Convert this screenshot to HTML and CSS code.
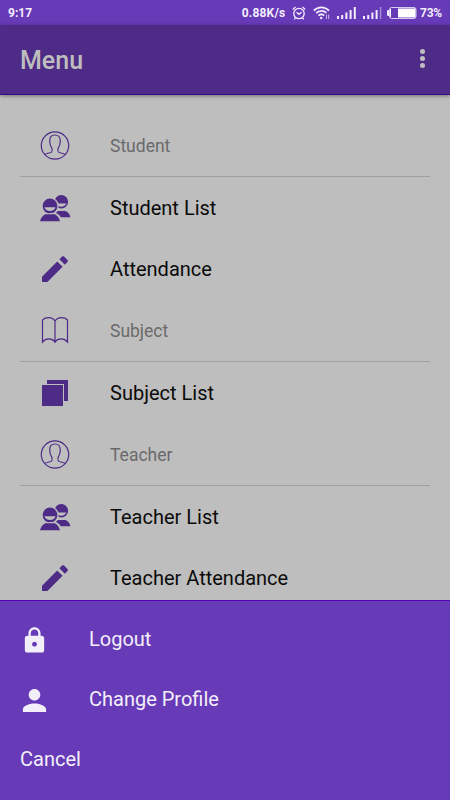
FILE: index.html
```html
<!DOCTYPE html>
<html lang="en">
<head>
<meta charset="utf-8">
<title>Menu</title>
<link rel="stylesheet" href="styles.css">
</head>
<body>
<svg class="defs" width="0" height="0" aria-hidden="true">
  <symbol id="contact" viewBox="0 0 30 30"><g fill="none" stroke="currentColor" stroke-width="1.200"><circle cx="15" cy="15.500" r="13.700"/><path d="M4.500 24.500c2-1.300 5.800-1.300 7.200-2.700.8-.9.500-2.400.1-3.600-1.300-1.800-2.100-4.200-2.100-7.200 0-4 1.700-6 5.300-6s5.300 2 5.300 6c0 3-.8 5.400-2.100 7.200-.4 1.200-.7 2.700.1 3.600 1.400 1.400 5.200 1.400 7.200 2.700"/></g></symbol>
  <symbol id="people" viewBox="-2 0 34 30"><g fill="currentColor"><circle cx="21.300" cy="8.700" r="6.800"/><path class="cut" d="M16 10.500h10.300c-.6 2-2.700 3.200-5 3.200S16.500 12.500 16 10.500z"/><path d="M16 24.300v-4.500l2-1.800h7c2.900.7 4.700 3 5.500 6.300z"/><circle class="cut" cx="10" cy="13" r="8.700"/><circle cx="10" cy="13" r="7.400"/><path class="cut" d="M4.400 14.300h11.200c-.7 2.400-2.900 3.800-5.600 3.800s-4.900-1.400-5.600-3.800z"/><path class="cut" d="M9 20h7c2.700 1 4.400 3 5.200 5.500V29H9z"/><path d="M0 28.200c.8-3.400 2.600-5.700 5.200-7h9.600c2.600 1.300 4.400 3.600 5.200 7z"/></g></symbol>
  <symbol id="pencil" viewBox="0 0 30 30"><path fill="currentColor" d="M2 22.700V28h5.400L22.600 12.800l-5.400-5.400zM27.500 8c.6-.6.6-1.400 0-2l-3.400-3.400c-.6-.6-1.400-.6-2 0l-2.700 2.700L24.800 10.700z"/></symbol>
  <symbol id="book" viewBox="0 0 30 30"><path fill="none" stroke="currentColor" stroke-width="1.200" d="M15 6c-1.500-2.200-3.600-3.300-6.300-3.300S4 3.500 2.500 5v22c3.400-4.100 9.400-4.100 12.500 0 3.100-4.100 9.100-4.100 12.500 0V5c-1.500-1.500-3.500-2.300-6.200-2.300S16.500 3.800 15 6zm0 0v22"/></symbol>
  <symbol id="copies" viewBox="0 0 30 30"><path fill="currentColor" d="M2 7h21v21H2zM7 2h21v21h-4V6H7z"/></symbol>
  <symbol id="lock" viewBox="0 0 24 24"><path fill="currentColor" d="M18 8h-1V6c0-2.760-2.240-5-5-5S7 3.240 7 6v2H6c-1.100 0-2 .9-2 2v10c0 1.100.9 2 2 2h12c1.100 0 2-.9 2-2V10c0-1.100-.9-2-2-2zm-6 9c-1.100 0-2-.9-2-2s.9-2 2-2 2 .9 2 2-.9 2-2 2zm3.100-9H8.900V6c0-1.710 1.390-3.100 3.100-3.100s3.100 1.390 3.100 3.100z"/></symbol>
  <symbol id="person" viewBox="2 2 20 20"><path fill="currentColor" d="M12 12c2.210 0 4-1.790 4-4s-1.790-4-4-4-4 1.790-4 4 1.790 4 4 4zm0 2c-2.670 0-8 1.340-8 4v2h16v-2c0-2.660-5.330-4-8-4z"/></symbol>
</svg>

<div class="status">
  <span class="clock">9:17</span>
  <span class="speed">0.88K/s</span>
  <svg class="alarm" width="14" height="14" viewBox="0 0 14 14" fill="none" stroke="#f3edff" stroke-width="1.300"><circle cx="7" cy="7.500" r="5.200"/><path d="M.8 3.500 3.500.9M13.200 3.500 10.500.9M4.500 6.300 7 8.300l2.500-2M3.300 12l-1 1.300M10.700 12l1 1.300"/></svg>
  <svg class="wifi" width="17" height="14" viewBox="0 0 17 14" fill="none" stroke="#f3edff" stroke-width="1.700"><path d="M.8 4.600c4.300-4.400 10.900-4.400 15.200 0M3.200 7.200c3-3 7.400-3 10.200-.3M5.500 9.700c1.700-1.700 4-1.700 5.600-.1"/><circle cx="8.200" cy="12" r="1.200" fill="#f3edff" stroke="none"/><path stroke-width="1" stroke="#c9b8e8" d="M13.500 8.500V13M15.700 8.500V13"/></svg>
  <svg class="signal" width="19" height="12" viewBox="0 0 19 12" fill="#f3edff"><path d="M0 9h2v3H0zM4.200 8h2v4h-2zM8.400 5.500h2V12h-2zM12.600 3h2v9h-2zM16.800 0h2v12h-2z"/></svg>
  <svg class="signal" width="19" height="12" viewBox="0 0 19 12" fill="#f3edff"><path d="M0 9h2v3H0zM4.200 8h2v4h-2zM8.400 5.500h2V12h-2zM12.600 3h2v9h-2z"/><path fill="#a58dd2" d="M16.800 0h1.500v12h-1.500z"/></svg>
  <svg class="battery" width="30" height="12" viewBox="0 0 30 12"><path fill="#f3edff" d="M2 3H1Q0 3 0 4v4q0 1 1 1h1z"/><rect x="2.500" y=".5" width="26.500" height="11" rx="2" fill="none" stroke="#d9ccef"/><path fill="#fff" d="M11 1.500h17.500v9H11zM3 2h1v8H3z"/></svg>
  <span class="percent">73%</span>
</div>

<header class="bar">
  <h1>Menu</h1>
  <span class="more"><i></i><i></i><i></i></span>
</header>

<main class="list">
  <div class="row head"><svg class="icon"><use href="#contact"/></svg><span>Student</span></div>
  <div class="row"><svg class="icon wide"><use href="#people"/></svg><span>Student List</span></div>
  <div class="row short"><svg class="icon"><use href="#pencil"/></svg><span>Attendance</span></div>
  <div class="row head"><svg class="icon"><use href="#book"/></svg><span>Subject</span></div>
  <div class="row"><svg class="icon"><use href="#copies"/></svg><span>Subject List</span></div>
  <div class="row head"><svg class="icon"><use href="#contact"/></svg><span>Teacher</span></div>
  <div class="row"><svg class="icon wide"><use href="#people"/></svg><span>Teacher List</span></div>
  <div class="row short"><svg class="icon"><use href="#pencil"/></svg><span>Teacher Attendance</span></div>
</main>

<section class="sheet">
  <div class="action"><svg class="glyph"><use href="#lock"/></svg><span>Logout</span></div>
  <div class="action"><svg class="glyph"><use href="#person"/></svg><span>Change Profile</span></div>
  <div class="action"><span>Cancel</span></div>
</section>
</body>
</html>
```
FILE: styles.css
```css
* { box-sizing: border-box; }
body {
  margin: 0;
  width: 450px;
  height: 800px;
  overflow: hidden;
  display: flex;
  flex-direction: column;
  background: #bebebe;
  font-family: Roboto, sans-serif;
}
.defs { display: none; }
.status {
  flex: none;
  height: 25px;
  padding: 0 8px;
  display: flex;
  align-items: center;
  background: #673ab7;
  color: #f3edff;
  font-size: 12px;
  font-weight: 700;
}
.status svg { flex: none; }
.speed { margin-left: auto; letter-spacing: .2px; }
.alarm { margin-left: 7px; }
.wifi { margin-left: 7px; }
.signal { margin-left: 7px; margin-top: 1px; }
.battery { margin-left: 5px; }
.percent { margin-left: 2.500px; letter-spacing: -.2px; }
.bar {
  flex: none;
  height: 70px;
  padding: 0 20px;
  display: flex;
  align-items: center;
  justify-content: space-between;
  background: #4d2b87;
  border-bottom: 1px solid #3c0787;
  box-shadow: 0 1px 4px rgba(0, 0, 0, .4);
}
.bar h1 {
  margin: 2px 0 0;
  font-size: 25px;
  font-weight: 500;
  color: #bebebe;
}
.more {
  width: 15px;
  margin-bottom: 2px;
  display: flex;
  flex-direction: column;
  align-items: center;
  gap: 2.400px;
}
.more i {
  width: 5px;
  height: 5px;
  border-radius: 50%;
  background: #bebebe;
}
.list {
  flex: none;
  height: 505px;
  padding: 20px 20px 0;
  overflow: hidden;
}
.row {
  height: 62px;
  padding-left: 20px;
  display: flex;
  align-items: center;
  gap: 40px;
  font-size: 20px;
  color: #0b0b0b;
}
.row.short { height: 61px; padding-bottom: 1px; }
.row.head {
  padding-bottom: 1px;
  font-size: 17.500px;
  color: #6a6a6a;
  border-bottom: 1px solid #a0a0a0;
}
.row.head span { padding-top: 1px; }
.icon {
  flex: none;
  width: 30px;
  height: 30px;
  color: #4d2b87;
}
.icon.wide {
  width: 34px;
  margin: 0 -2px;
}
.cut { fill: #bebebe; }
.sheet {
  flex: none;
  height: 200px;
  padding: 8px 20px;
  background: #673ab7;
  border-top: 1px solid #5300b5;
  color: #f3effa;
}
.action {
  height: 60px;
  display: flex;
  align-items: center;
  gap: 40px;
  font-size: 20px;
}
.glyph { width: 29px; height: 29px; margin-top: 2px; }
```
